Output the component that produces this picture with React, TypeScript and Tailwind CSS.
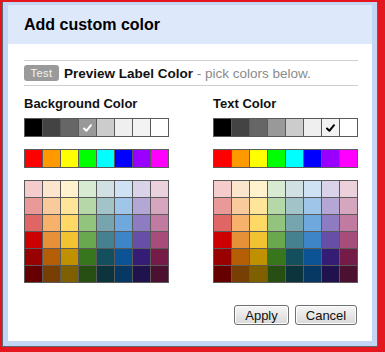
const greys = ["#000000", "#434343", "#666666", "#999999", "#cccccc", "#efefef", "#f3f3f3", "#ffffff"];
const brights = ["#ff0000", "#ff9900", "#ffff00", "#00ff00", "#00ffff", "#0000ff", "#9900ff", "#ff00ff"];
const shades = [
  ["#f4cccc", "#fce5cd", "#fff2cc", "#d9ead3", "#d0e0e3", "#cfe2f3", "#d9d2e9", "#ead1dc"],
  ["#ea9999", "#f9cb9c", "#ffe599", "#b6d7a8", "#a2c4c9", "#9fc5e8", "#b4a7d6", "#d5a6bd"],
  ["#e06666", "#f6b26b", "#ffd966", "#93c47d", "#76a5af", "#6fa8dc", "#8e7cc3", "#c27ba0"],
  ["#cc0000", "#e69138", "#f1c232", "#6aa84f", "#45818e", "#3d85c6", "#674ea7", "#a64d79"],
  ["#990000", "#b45f06", "#bf9000", "#38761d", "#134f5c", "#0b5394", "#351c75", "#741b47"],
  ["#660000", "#783f04", "#7f6000", "#274e13", "#0c343d", "#073763", "#20124d", "#4c1130"],
];

function Check({ color }: { color: string }) {
  return (
    <svg width="9" height="8" viewBox="0 0 9 8" className="mt-[1px]">
      <path d="M1 4.5 L3.4 6.8 L8 1.2" fill="none" stroke={color} strokeWidth="2" strokeLinecap="round" strokeLinejoin="round" />
    </svg>
  );
}

function Row({ colors, checked, checkColor }: { colors: string[]; checked?: number; checkColor?: string }) {
  return (
    <div className="flex w-fit border-l border-t border-[#5a5a5a]">
      {colors.map((c, i) => (
        <div
          key={c}
          className="flex h-[18px] w-[18px] items-center justify-center border-b border-r border-[#5a5a5a]"
          style={{ backgroundColor: c }}
        >
          {checked === i && <Check color={checkColor ?? "#fff"} />}
        </div>
      ))}
    </div>
  );
}

function Palette({ title, checked, checkColor }: { title: string; checked: number; checkColor: string }) {
  return (
    <div className="flex flex-col">
      <div className="text-[13px] font-bold leading-[15px] text-[#111]">{title}</div>
      <div className="mt-[7px]">
        <Row colors={greys} checked={checked} checkColor={checkColor} />
      </div>
      <div className="mt-[12px]">
        <Row colors={brights} />
      </div>
      <div className="mt-[12px] flex w-fit flex-col border-l border-t border-[#5a5a5a]">
        {shades.map((r, ri) => (
          <div key={ri} className="flex">
            {r.map((c) => (
              <div key={c} className="h-[17px] w-[18px] border-b border-r border-[#5a5a5a]" style={{ backgroundColor: c }} />
            ))}
          </div>
        ))}
      </div>
    </div>
  );
}

export default function App() {
  return (
    <div className="h-[352px] w-[385px] bg-[#e3171d] pb-[5px] pl-[2px] pr-[7px] pt-[2px] font-['Liberation_Sans',Arial,sans-serif]">
      <div className="h-full border-x border-b border-[#5d6570] bg-[#c5d6f4] px-[5px] pb-[5px] pt-[3px]">
        <div className="flex h-full flex-col bg-white">
          {/* title bar */}
          <div className="flex h-[39px] shrink-0 items-center bg-[#dde8fb] pl-4 pt-[1px]">
            <h1 className="text-[16px] font-bold leading-[18px] text-black">Add custom color</h1>
          </div>

          <div className="flex flex-1 flex-col pl-4 pr-[14px]">
            <div className="mt-4 border-t border-[#cfcfcf]" />
            <div className="flex h-[24px] items-center gap-[5px]">
              <span className="flex h-[16px] w-[35px] items-center justify-center rounded-[3px] bg-[#9a9a9a] text-[11px] leading-none tracking-[0.5px] text-[#f4f4f4]">
                Test
              </span>
              <span className="whitespace-nowrap text-[13.5px] leading-[15px]">
                <span className="font-bold text-[#111]">Preview Label Color</span>
                <span className="text-[#8a8a8a]"> - pick colors below.</span>
              </span>
            </div>
            <div className="border-t border-[#cfcfcf]" />

            <div className="mt-[10px] flex gap-[44px]">
              <Palette title="Background Color" checked={3} checkColor="#ffffff" />
              <Palette title="Text Color" checked={6} checkColor="#000000" />
            </div>

            <div className="mt-[22px] flex justify-end gap-[6px] pr-[1px]">
              <button className="h-[20px] w-[55px] rounded-[3px] border border-[#707070] bg-gradient-to-b from-[#f6f6f6] to-[#d9d9d9] text-[13px] leading-none text-[#111] shadow-[inset_0_0_0_1px_#fcfcfc]">
                Apply
              </button>
              <button className="h-[20px] w-[62px] rounded-[3px] border border-[#707070] bg-gradient-to-b from-[#f6f6f6] to-[#d9d9d9] text-[13px] leading-none text-[#111] shadow-[inset_0_0_0_1px_#fcfcfc]">
                Cancel
              </button>
            </div>
          </div>
        </div>
      </div>
    </div>
  );
}
